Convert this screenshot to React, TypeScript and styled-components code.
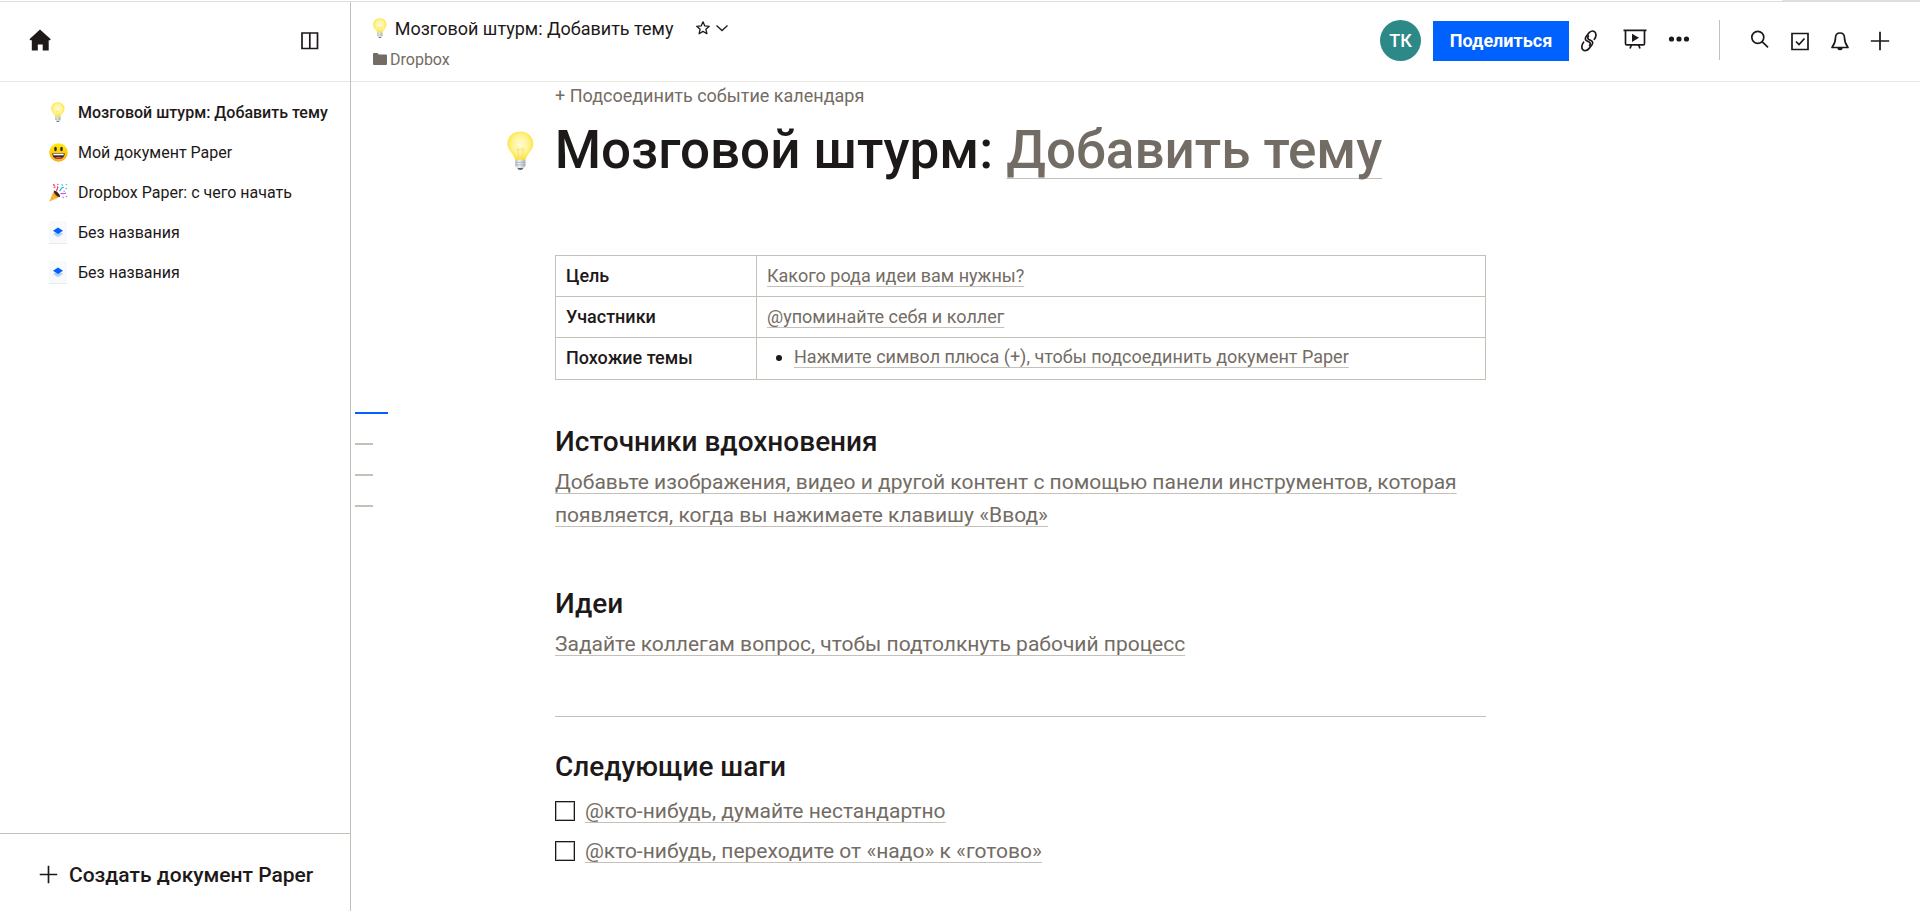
import React from "react";
import styled, { createGlobalStyle } from "styled-components";

const color = {
  ink: "#1e1919",
  muted: "#736c64",
  line: "#c6c1b8",
  faint: "#e8e6e1",
  blue: "#0061fe",
  teal: "#2d8987",
};

const GlobalStyle = createGlobalStyle`
  *, *::before, *::after { box-sizing: border-box; }
  body {
    margin: 0;
    background: #fff;
    color: ${color.ink};
    font-family: Roboto, "Liberation Sans", sans-serif;
    font-size: 18px;
  }
  button { font-family: inherit; color: inherit; border: 0; background: none; padding: 0; cursor: pointer; }
  svg { display: block; flex: none; }
`;

/* ---------- Layout ---------- */

const Page = styled.div`
  display: flex;
  flex-direction: column;
  min-height: 100vh;
`;

const TopEdge = styled.div`
  height: 2px;
  border-bottom: 1px solid #dedede;
  display: flex;
  justify-content: flex-end;
`;

const TopEdgeTab = styled.span`
  width: 138px;
  background: #e0e0e0;
`;

const Body = styled.div`
  flex: 1;
  display: grid;
  grid-template-columns: 351px minmax(0, 1fr);
`;

const Sidebar = styled.aside`
  display: flex;
  flex-direction: column;
  border-right: 1px solid ${color.line};
`;

const SidebarHeader = styled.div`
  height: 80px;
  display: flex;
  align-items: center;
  justify-content: space-between;
  padding: 0 30px 2px 28px;
  border-bottom: 1px solid ${color.faint};
`;

const DocList = styled.ul`
  flex: 1;
  list-style: none;
  margin: 0;
  padding: 10px 0 0;
`;

const DocLink = styled.a<{ $current?: boolean }>`
  display: flex;
  align-items: center;
  gap: 10px;
  height: 40px;
  padding-left: 48px;
  font-size: 16px;
  font-weight: ${(p) => (p.$current ? 500 : 400)};
  color: ${color.ink};
  text-decoration: none;
  white-space: nowrap;
`;

const DocIcon = styled.span`
  width: 20px;
  display: flex;
  justify-content: center;
`;

const CreateButton = styled.button`
  && {
    display: flex;
    align-items: center;
    gap: 10px;
    height: 78px;
    padding: 4px 0 0 38px;
    border-top: 1px solid ${color.line};
    font-size: 21px;
    font-weight: 500;
    white-space: nowrap;
  }
`;

const Main = styled.div`
  display: flex;
  flex-direction: column;
`;

const Header = styled.header`
  height: 80px;
  display: flex;
  justify-content: space-between;
  padding: 0 20px 0 22px;
  border-bottom: 1px solid ${color.faint};
`;

const HeaderInfo = styled.div`
  padding-top: 12px;
`;

const HeaderTitle = styled.div`
  display: flex;
  align-items: center;
  height: 28px;
  gap: 8px;
  font-size: 18px;
  white-space: nowrap;
`;

const StarGroup = styled.span`
  display: flex;
  gap: 4px;
  margin-left: 14px;
`;

const FolderLink = styled.a`
  display: inline-flex;
  align-items: center;
  gap: 3px;
  height: 24px;
  margin-top: 5px;
  font-size: 16px;
  color: ${color.muted};
  text-decoration: none;
`;

const HeaderTools = styled.div`
  display: flex;
  align-items: center;
  padding-bottom: 2px;
`;

const Avatar = styled.button`
  && {
    width: 41px;
    height: 41px;
    border-radius: 50%;
    background: ${color.teal};
    color: #fff;
    font-size: 18px;
    font-weight: 500;
    margin-right: 12px;
  }
`;

const ShareButton = styled.button`
  && {
    width: 136px;
    height: 40px;
    background: ${color.blue};
    color: #fff;
    font-size: 18px;
    font-weight: 700;
  }
`;

const IconButton = styled.button<{ $width: number }>`
  && {
    width: ${(p) => p.$width}px;
    height: 40px;
    display: flex;
    align-items: center;
    justify-content: center;
  }
`;

const ToolDivider = styled.span`
  width: 1px;
  height: 40px;
  margin: 0 20px 2px 18px;
  background: ${color.line};
`;

const Content = styled.main`
  display: flex;
`;

/* ---------- Outline ---------- */

const Outline = styled.nav`
  width: 204px;
  flex: none;
  padding: 330px 0 0 4px;
  display: flex;
  flex-direction: column;
  gap: 29px;
`;

const OutlineMark = styled.a<{ $active?: boolean }>`
  display: block;
  height: 2px;
  width: ${(p) => (p.$active ? 33 : 18)}px;
  background: ${(p) => (p.$active ? color.blue : color.line)};
`;

/* ---------- Document ---------- */

const Doc = styled.article`
  flex: 0 1 931px;
  min-width: 0;
`;

const CalendarButton = styled.button`
  && {
    display: block;
    line-height: 28px;
    font-size: 18px;
    color: ${color.muted};
  }
`;

const TitleRow = styled.div`
  display: flex;
  align-items: center;
  gap: 21px;
  margin: 8px 0 73px -48px;
`;

const Title = styled.h1`
  margin: 0;
  font-size: 53px;
  line-height: 64px;
  font-weight: 500;
`;

const Hint = styled.span<{ $offset?: number }>`
  color: ${color.muted};
  text-decoration: underline 1px ${color.line};
  text-underline-offset: ${(p) => p.$offset ?? 4}px;
  text-decoration-skip-ink: none;
`;

const InfoTable = styled.table`
  width: 100%;
  border-collapse: collapse;
  font-size: 18px;
  tr:last-child { height: 42px; }
`;

const LabelCell = styled.th`
  width: 201px;
  height: 41px;
  padding: 0 10px 2px;
  border: 1px solid ${color.line};
  text-align: left;
  font-weight: 500;
`;

const ValueCell = styled.td`
  padding: 0 10px 2px;
  border: 1px solid ${color.line};
`;

const Bullets = styled.ul`
  margin: 0;
  padding: 0 0 2px 27px;
  li::marker { color: ${color.ink}; }
`;

const Section = styled.section<{ $gap: number }>`
  margin-top: ${(p) => p.$gap}px;
`;

const Heading = styled.h2`
  margin: 0 0 6px;
  font-size: 28px;
  line-height: 36px;
  font-weight: 500;
`;

const Paragraph = styled.p`
  margin: 0;
  font-size: 21px;
  line-height: 33px;
`;

const Rule = styled.hr`
  margin: 55px 0 0;
  border: 0;
  border-top: 1px solid ${color.line};
`;

const Task = styled.label`
  display: flex;
  align-items: center;
  gap: 10px;
  min-height: 40px;
  font-size: 21px;
`;

const Checkbox = styled.input`
  appearance: none;
  width: 20px;
  height: 20px;
  margin: 0;
  border: 1px solid ${color.ink};
  box-shadow: inset 0 0 0 1px #b4b2b2;
`;

/* ---------- Icons ---------- */

function Bulb({ id, height }: { id: string; height: number }) {
  return (
    <svg height={height} width={(height * 26) / 38} viewBox="0 0 26 38" aria-hidden="true">
      <defs>
        <radialGradient id={id} cx="0.5" cy="0.45" r="0.55">
          <stop offset="0" stopColor="#fffcd6" />
          <stop offset="0.6" stopColor="#fff38f" />
          <stop offset="1" stopColor="#fbe130" />
        </radialGradient>
        <linearGradient id={id + "base"}>
          <stop offset="0" stopColor="#b9c0c4" />
          <stop offset="0.4" stopColor="#eef2f3" />
          <stop offset="1" stopColor="#a9b2b7" />
        </linearGradient>
      </defs>
      <path d="M13 0.4C5.8 0.4 0.4 5.6 0.4 12.2c0 5.4 3.2 8 5.4 11.2 1.3 2 1.6 3.6 2.4 5.2h9.6c.8-1.6 1.1-3.2 2.4-5.2 2.2-3.200 5.400-5.800 5.400-11.200C25.600 5.600 20.200.4 13 .4z" fill={`url(#${id})`} />
      <path d="M11.500 27L10 17l1.500 2 1.500-2 1.500 2L16 17l-1.500 10" fill="none" stroke="#f1d27c" strokeWidth="0.6" />
      <path d="M8 28h10v5.500q0 2-2.500 2.500h-5Q8 35.500 8 33.500z" fill={`url(#${id}base)`} />
      <path d="M8 30.500h10M8 33h10" stroke="#9aa5ab" strokeWidth="0.6" />
      <path d="M10 36h6q-.5 2-3 2t-3-2z" fill="#59646b" />
    </svg>
  );
}

const Smile = () => (
  <svg width="19" height="19" viewBox="0 0 19 19" aria-hidden="true">
    <defs>
      <linearGradient id="smile" x1="0" y1="0" x2="0" y2="1">
        <stop offset="0" stopColor="#fff000" />
        <stop offset="1" stopColor="#ffa81a" />
      </linearGradient>
    </defs>
    <circle cx="9.500" cy="9.500" r="9.300" fill="url(#smile)" />
    <ellipse cx="6.500" cy="6" rx="1.300" ry="2.300" fill="#2c2b30" />
    <ellipse cx="12.500" cy="6" rx="1.300" ry="2.300" fill="#2c2b30" />
    <path d="M3.300 10.200h12.400c0 3.600-2.600 5.800-6.200 5.800s-6.200-2.200-6.200-5.800z" fill="#2c2b30" />
    <path d="M4.300 10.700h10.400v1.600H4.300z" fill="#fff" />
    <path d="M6 14.600q3.500-1.600 7 0-1.300 1.200-3.500 1.200T6 14.600z" fill="#f0456a" />
  </svg>
);

const Party = () => (
  <svg width="19" height="19" viewBox="0 0 19 19" aria-hidden="true">
    <path d="M0.300 18.600L5 7.800q4.500 1.200 6 6z" fill="#f5a623" />
    <path d="M5 7.800c-1 1.700 4 7.400 6 6 .8-1.800-4-7-6-6z" fill="#3a2420" />
    <path d="M3 12.500l4 4M1.800 15.200l2 2" stroke="#ffd766" strokeWidth="0.900" />
    <path d="M7.500 8.500c0-3 2-2.500 1-5.200" fill="none" stroke="#f0415a" strokeWidth="1.200" />
    <path d="M4.200 1.200l1.600 1.600M4.500 4.500l2-.6M8.500.8l.8 1" stroke="#f0415a" strokeWidth="1.300" />
    <path d="M10.500 8c2-2 1.500-4 4.500-3.500" fill="none" stroke="#36b8e8" strokeWidth="1.200" />
    <path d="M12.500 1.500l1.500 1M17 1l.8 1.300M16.500 6l1.500-.8" stroke="#36c9e0" strokeWidth="1.200" />
    <path d="M11.500 11c2-1.600 3 .8 5.500-1" fill="none" stroke="#b266e0" strokeWidth="1.200" />
    <path d="M13.500 14l1.500.6M17 13l1 1M14.500 8l1.300.5" stroke="#c07bea" strokeWidth="1.200" />
  </svg>
);

const PaperDoc = () => (
  <svg width="18" height="23" viewBox="0 0 18 23" aria-hidden="true">
    <path d="M0 0h18v23H0z" fill="#f7f9fb" />
    <path d="M0 22h18v1H0z" fill="#e9ebee" />
    <path d="M4 13L9 9.700l5 3.300L9 16.300z" fill="#b4d0f7" />
    <path d="M4 9.800L9 6.500l5 3.300L9 13.100z" fill={color.blue} />
  </svg>
);

const Home = () => (
  <svg width="24" height="24" viewBox="0 0 24 24" aria-hidden="true">
    <path d="M12 0.500L22.800 10.200l-1.300 1.200-.8-.4v10.500h-6v-6H9.800v6h-6V11l-1 .4L1.400 10.200z" fill={color.ink} />
  </svg>
);

const Panel = () => (
  <svg width="20" height="20" viewBox="0 0 20 20" aria-hidden="true">
    <path d="M2 2h15.500v15.500H2zM9.800 2v15.500" fill="none" stroke={color.ink} strokeWidth="1.700" />
  </svg>
);

const Folder = () => (
  <svg width="14" height="12" viewBox="0 0 14 12" aria-hidden="true">
    <path d="M0 1q0-1 1-1h3.500l1.300 1.500H13q1 0 1 1V11q0 1-1 1H1q-1 0-1-1z" fill={color.muted} />
  </svg>
);

const Star = () => (
  <svg width="16" height="16" viewBox="0 0 16 16" aria-hidden="true">
    <path d="M8 1.800l1.800 4.100 4.500.4-3.400 3 1 4.400L8 11.400l-3.900 2.300 1-4.400-3.400-3 4.500-.4z" fill="none" stroke={color.ink} strokeWidth="1.300" strokeLinejoin="round" />
  </svg>
);

const Chevron = () => (
  <svg width="14" height="16" viewBox="0 0 14 16" aria-hidden="true">
    <path d="M1.500 5.500L7 10.500l5.500-5" fill="none" stroke={color.ink} strokeWidth="1.300" />
  </svg>
);

const Chain = () => (
  <svg width="24" height="24" viewBox="0 0 24 24" fill="none" stroke={color.ink} strokeWidth="1.700" strokeLinecap="round" aria-hidden="true">
    <path d="M15.300 10.300c2.100-2.600 2.200-6 .4-7.400-1.700-1.300-4.300-.9-5.900 1.100L7.200 7.400c-1.500 2-1 3.800.9 4.700l2 .9c1.500.8 1.500 2.200.5 3.500" />
    <path d="M4.600 13.200c-2.100 2.600-2.400 6.200-.6 7.600 1.700 1.300 4.300.8 5.900-1.200l2.900-3.600c1.500-2 1-3.700-.9-4.600l-2-.9c-1.500-.8-1.500-2.200-.5-3.500" />
  </svg>
);

const Present = () => (
  <svg width="24" height="24" viewBox="0 0 24 24" aria-hidden="true">
    <path d="M0.500 1.300h23M2.500 1.300v13.200q0 1.400 1.400 1.400h16.200q1.400 0 1.400-1.400V1.300M8.300 16.200L7 19.500M15.700 16.200L17 19.500" fill="none" stroke={color.ink} strokeWidth="1.700" />
    <path d="M9 4.700v8.300l7-4.150z" fill={color.ink} />
  </svg>
);

const Dots = () => (
  <svg width="24" height="24" viewBox="0 0 24 24" fill={color.ink} aria-hidden="true">
    <circle cx="4.500" cy="10" r="2.600" />
    <circle cx="12" cy="10" r="2.600" />
    <circle cx="19.500" cy="10" r="2.600" />
  </svg>
);

const Search = () => (
  <svg width="24" height="24" viewBox="0 0 24 24" fill="none" stroke={color.ink} strokeWidth="1.700" aria-hidden="true">
    <circle cx="9.800" cy="8.300" r="6" />
    <path d="M14 12.700l6 5.600" />
  </svg>
);

const Tick = () => (
  <svg width="24" height="24" viewBox="0 0 24 24" fill="none" stroke={color.ink} strokeWidth="1.700" aria-hidden="true">
    <path d="M4 4.500h16v16H4z" />
    <path d="M8 12.500l3 3 5.500-6" />
  </svg>
);

const Bell = () => (
  <svg width="24" height="24" viewBox="0 0 24 24" aria-hidden="true">
    <path d="M12 4c-3 0-4.500 2-4.500 4.800 0 5.200-1.300 6.800-3.500 9.700h16c-2.200-2.900-3.500-4.500-3.500-9.700C16.500 6 15 4 12 4z" fill="none" stroke={color.ink} strokeWidth="1.700" strokeLinejoin="round" />
    <path d="M9 18.500h6q-.6 2.800-3 2.800t-3-2.800z" fill={color.ink} />
  </svg>
);

const Plus = ({ size = 24 }: { size?: number }) => (
  <svg width={size} height={size} viewBox="0 0 24 24" aria-hidden="true">
    <path d="M12 2v20M2 12h20" stroke={color.ink} strokeWidth="1.900" />
  </svg>
);

/* ---------- Data ---------- */

const docs = [
  { name: "Мозговой штурм: Добавить тему", icon: <Bulb id="bulb-list" height={20} />, current: true },
  { name: "Мой документ Paper", icon: <Smile /> },
  { name: "Dropbox Paper: с чего начать", icon: <Party /> },
  { name: "Без названия", icon: <PaperDoc /> },
  { name: "Без названия", icon: <PaperDoc /> },
];

const outline = [
  { id: "title", label: "Мозговой штурм" },
  { id: "inspiration", label: "Источники вдохновения" },
  { id: "ideas", label: "Идеи" },
  { id: "steps", label: "Следующие шаги" },
];

const tasks = [
  "@кто-нибудь, думайте нестандартно",
  "@кто-нибудь, переходите от «надо» к «готово»",
];

export default function App() {
  return (
    <Page>
      <GlobalStyle />
      <TopEdge>
        <TopEdgeTab />
      </TopEdge>
      <Body>
        <Sidebar>
          <SidebarHeader>
            <IconButton $width={24} aria-label="Главная"><Home /></IconButton>
            <IconButton $width={20} aria-label="Панель"><Panel /></IconButton>
          </SidebarHeader>
          <DocList>
            {docs.map((doc, i) => (
              <li key={i}>
                <DocLink href="#" $current={doc.current}>
                  <DocIcon>{doc.icon}</DocIcon>
                  {doc.name}
                </DocLink>
              </li>
            ))}
          </DocList>
          <CreateButton>
            <Plus size={21} />
            Создать документ Paper
          </CreateButton>
        </Sidebar>

        <Main>
          <Header>
            <HeaderInfo>
              <HeaderTitle>
                <Bulb id="bulb-header" height={20} />
                <span>Мозговой штурм: Добавить тему</span>
                <StarGroup>
                  <IconButton $width={16} aria-label="В избранное"><Star /></IconButton>
                  <IconButton $width={14} aria-label="Меню документа"><Chevron /></IconButton>
                </StarGroup>
              </HeaderTitle>
              <FolderLink href="#">
                <Folder />
                Dropbox
              </FolderLink>
            </HeaderInfo>
            <HeaderTools>
              <Avatar>ТК</Avatar>
              <ShareButton>Поделиться</ShareButton>
              <IconButton $width={44} aria-label="Копировать ссылку"><Chain /></IconButton>
              <IconButton $width={44} aria-label="Презентация"><Present /></IconButton>
              <IconButton $width={44} aria-label="Ещё"><Dots /></IconButton>
              <ToolDivider />
              <IconButton $width={40} aria-label="Поиск"><Search /></IconButton>
              <IconButton $width={40} aria-label="Задачи"><Tick /></IconButton>
              <IconButton $width={40} aria-label="Уведомления"><Bell /></IconButton>
              <IconButton $width={40} aria-label="Создать"><Plus size={22} /></IconButton>
            </HeaderTools>
          </Header>

          <Content>
            <Outline aria-label="Содержание">
              {outline.map((mark, i) => (
                <OutlineMark key={mark.id} href={`#${mark.id}`} aria-label={mark.label} $active={i === 0} />
              ))}
            </Outline>
            <Doc>
              <CalendarButton>+ Подсоединить событие календаря</CalendarButton>
              <TitleRow>
                <Bulb id="bulb-title" height={39} />
                <Title id="title">
                  Мозговой штурм: <Hint $offset={10}>Добавить тему</Hint>
                </Title>
              </TitleRow>

              <InfoTable>
                <tbody>
                  <tr>
                    <LabelCell scope="row">Цель</LabelCell>
                    <ValueCell><Hint>Какого рода идеи вам нужны?</Hint></ValueCell>
                  </tr>
                  <tr>
                    <LabelCell scope="row">Участники</LabelCell>
                    <ValueCell><Hint>@упоминайте себя и коллег</Hint></ValueCell>
                  </tr>
                  <tr>
                    <LabelCell scope="row">Похожие темы</LabelCell>
                    <ValueCell>
                      <Bullets>
                        <li><Hint>Нажмите символ плюса (+), чтобы подсоединить документ Paper</Hint></li>
                      </Bullets>
                    </ValueCell>
                  </tr>
                </tbody>
              </InfoTable>

              <Section $gap={44}>
                <Heading id="inspiration">Источники вдохновения</Heading>
                <Paragraph>
                  <Hint>
                    Добавьте изображения, видео и другой контент с помощью панели инструментов, которая
                    появляется, когда вы нажимаете клавишу «Ввод»
                  </Hint>
                </Paragraph>
              </Section>

              <Section $gap={54}>
                <Heading id="ideas">Идеи</Heading>
                <Paragraph>
                  <Hint>Задайте коллегам вопрос, чтобы подтолкнуть рабочий процесс</Hint>
                </Paragraph>
              </Section>

              <Rule />

              <Section $gap={32}>
                <Heading id="steps">Следующие шаги</Heading>
                {tasks.map((task) => (
                  <Task key={task}>
                    <Checkbox type="checkbox" />
                    <Hint>{task}</Hint>
                  </Task>
                ))}
              </Section>
            </Doc>
          </Content>
        </Main>
      </Body>
    </Page>
  );
}
